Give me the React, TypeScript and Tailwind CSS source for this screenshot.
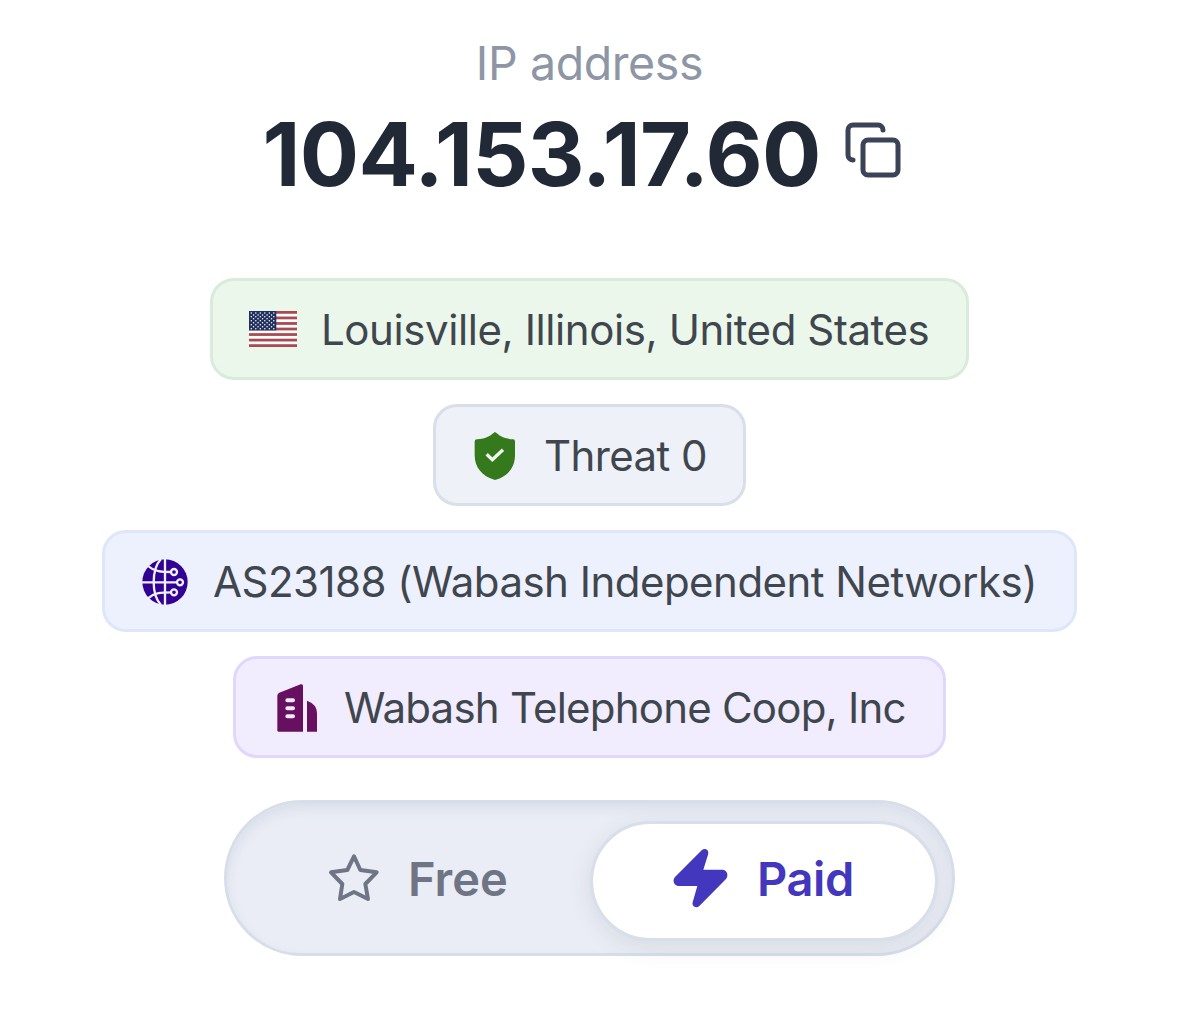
import type { ReactNode } from "react";
import { Copy } from "lucide-react";
import clsx from "clsx";

function FlagIcon() {
  const stripes = [0, 2, 4, 6, 8, 10, 12];
  const stars: { x: number; y: number }[] = [];
  for (let row = 0; row < 9; row++) {
    const count = row % 2 === 0 ? 6 : 5;
    for (let col = 0; col < count; col++) {
      stars.push({ x: 2.3 + col * 4.5 + (row % 2 === 0 ? 0 : 2.25), y: 1.9 + row * 1.98 });
    }
  }

  return (
    <svg width="48" height="36" viewBox="0 0 48 36">
      <rect width="48" height="36" fill="#fff" />
      {stripes.map((i) => (
        <rect key={i} y={(i * 36) / 13} width="48" height={36 / 13} fill="#a94a50" />
      ))}
      <rect width="27.3" height="19.4" fill="#22305f" />
      {stars.map((s, i) => (
        <circle key={i} cx={s.x} cy={s.y} r="0.75" fill="#fff" />
      ))}
    </svg>
  );
}

function ShieldIcon() {
  return (
    <svg width="48" height="48" viewBox="141 108 144 144" className="overflow-visible">
      <path
        d="M210 111C216 115 221 120 227 123C239 130 252 132 264 133Q270 133 270 139V180C270 217 250 243 210 255C170 243 149 217 149 180V139Q149 133 156 133C168 132 181 130 193 123C199 120 204 115 210 111Z"
        fill="#35791d"
      />
      <path d="M185 178L202 194L234 164" fill="none" stroke="#f3f8f1" strokeWidth="10" />
    </svg>
  );
}

function GlobeIcon() {
  return (
    <svg width="48" height="48" viewBox="138 104 144 144" className="overflow-visible">
      <circle cx="210" cy="179" r="68" fill="#330094" />
      <g fill="none" stroke="#edf1fe" strokeWidth="7">
        <path d="M210 108V250M140 180H246" />
        <path d="M198 110C180 129 176 155 176 180C176 205 180 229 198 248" />
        <path d="M159 131C178 148 200 149 228 149" />
        <path d="M159 228C178 211 200 210 228 210" />
        <circle cx="237" cy="149" r="9" fill="#330094" />
        <circle cx="255" cy="180" r="9" fill="#330094" />
        <circle cx="237" cy="210" r="9" fill="#330094" />
      </g>
    </svg>
  );
}

function BuildingIcon() {
  return (
    <svg width="48" height="48" viewBox="141 98 144 144" className="overflow-visible">
      <path
        d="M157 137Q157 130 163 127L227 102Q234 100 234 107V244H161Q157 244 157 240Z"
        fill="#66105f"
      />
      <path d="M246 151Q276 162 276 188V244H246Z" fill="#66105f" />
      <path d="M187 150H204M187 174H204M187 198H204" stroke="#f1ecfe" strokeWidth="12" strokeLinecap="round" />
    </svg>
  );
}

function StarIcon() {
  return (
    <svg width="50" height="49" viewBox="342 190 150 147" className="overflow-visible">
      <path
        d="M417 197L436 238L485 245L451 280L459 325L417 304L375 325L382 280L348 245L397 238Z"
        fill="none"
        stroke="#6f7585"
        strokeWidth="12"
        strokeLinejoin="round"
      />
    </svg>
  );
}

function BoltIcon() {
  return (
    <svg width="55" height="60" viewBox="280 178 165 180" className="overflow-visible">
      <path
        d="M366 182L286 262C277 272 283 289 297 289H353L339 338C336 350 349 358 359 349L439 268C448 257 442 240 428 240H371L385 195C390 180 375 173 366 182Z"
        fill="#4338bd"
      />
    </svg>
  );
}

interface Detail {
  id: string;
  label: string;
  icon: ReactNode;
  className: string;
}

const details: Detail[] = [
  {
    id: "location",
    label: "Louisville, Illinois, United States",
    icon: <FlagIcon />,
    className: "w-[759px] bg-[#ebf7eb] border-[#d9ebdb] tracking-[-0.41px]",
  },
  {
    id: "threat",
    label: "Threat 0",
    icon: <ShieldIcon />,
    className: "w-[313px] bg-[#eef1f7] border-[#d9deea] tracking-[-0.6px]",
  },
  {
    id: "asn",
    label: "AS23188 (Wabash Independent Networks)",
    icon: <GlobeIcon />,
    className: "w-[975px] bg-[#edf1fe] border-[#dde7f9] tracking-[-0.52px]",
  },
  {
    id: "company",
    label: "Wabash Telephone Coop, Inc",
    icon: <BuildingIcon />,
    className: "w-[713px] bg-[#f1ecfe] border-[#dfd8fa] tracking-[-0.78px]",
  },
];

export default function App() {
  return (
    <main className="flex h-[1021px] w-[1179px] flex-col items-center overflow-hidden bg-white font-['Inter',sans-serif]">
      <p className="mt-[33px] text-[46.5px] leading-[60px] tracking-[-0.4px] text-[#8e96a6]">IP address</p>

      <div className="mt-[15px] flex h-[92px] w-[654px] items-center justify-between">
        <h1 className="text-[88px] font-bold leading-[92px] tracking-[-0.7px] whitespace-nowrap text-[#212936]">
          104.153.17.60
        </h1>
        <Copy className="mb-[8px] mr-[14px] size-[60px] shrink-0 text-[#3b4356]" strokeWidth={2} />
      </div>

      <div className="mt-[78px] flex flex-col items-center gap-6">
        {details.map((item) => (
          <div
            key={item.id}
            className={clsx(
              "flex h-[102px] items-center gap-6 rounded-[24px] border-[3px] pl-9",
              item.className
            )}
          >
            <span className="shrink-0">{item.icon}</span>
            <span className="pt-px text-[42px] leading-[60px] whitespace-nowrap text-[#3f464e]">
              {item.label}
            </span>
          </div>
        ))}
      </div>

      <div className="mt-[42px] flex h-[156px] w-[731px] items-center rounded-full border-[3px] border-[#d8dee9] bg-[#eaedf5] pr-[14px] shadow-[inset_0_6px_12px_rgba(150,165,195,0.2)]">
        <button className="flex flex-1 items-center gap-[29px] pl-[102px] text-[47px] font-semibold text-[#6f7585]">
          <StarIcon />
          <span className="pt-[2px]">Free</span>
        </button>
        <button className="mt-[6px] flex h-[120px] w-[348px] items-center gap-[29px] rounded-full border-[3px] border-[#d8deea] bg-white bg-clip-padding pb-[4px] pl-[80px] text-[47px] font-semibold tracking-[-0.4px] text-[#4338bd] shadow-[0_6px_24px_rgba(60,75,80,0.11)]">
          <BoltIcon />
          Paid
        </button>
      </div>
    </main>
  );
}
